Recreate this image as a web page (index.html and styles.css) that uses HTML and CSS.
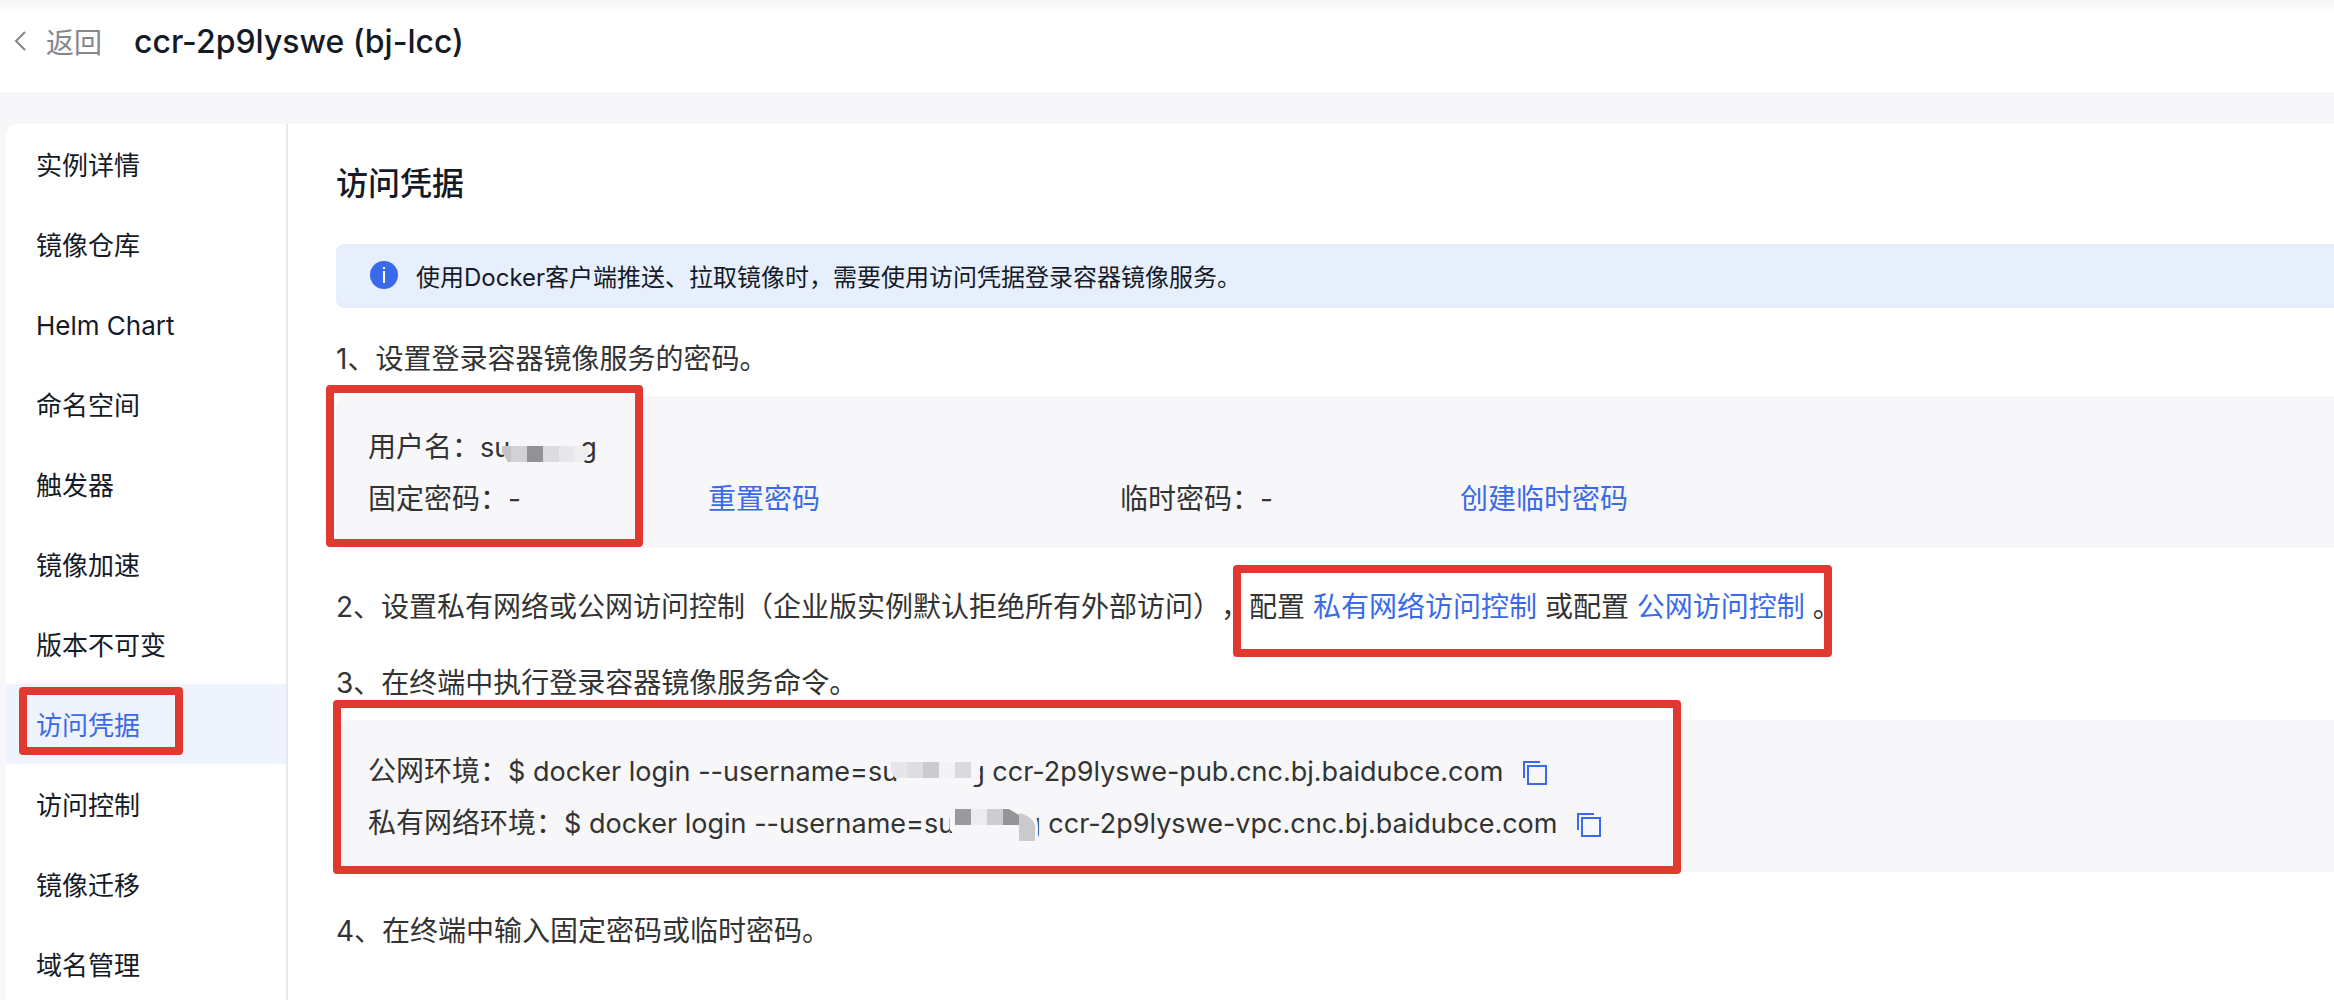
FILE: index.html
```html
<!DOCTYPE html>
<html lang="zh-CN">
<head>
<meta charset="utf-8">
<meta name="viewport" content="width=device-width, initial-scale=1">
<title>访问凭据 - ccr-2p9lyswe (bj-lcc)</title>
<link rel="stylesheet" href="styles.css">
</head>
<body>
<header class="page-header">
  <a class="back" href="#">
    <svg class="back-icon" viewBox="0 0 12 20" aria-hidden="true"><path d="M11 1 2 10l9 9"/></svg>
    <span>返回</span>
  </a>
  <h1 class="instance-name">ccr-2p9lyswe (bj-lcc)</h1>
</header>
<div class="layout">
  <nav class="sidebar">
    <a class="nav-item" href="#">实例详情</a>
    <a class="nav-item" href="#">镜像仓库</a>
    <a class="nav-item" href="#">Helm Chart</a>
    <a class="nav-item" href="#">命名空间</a>
    <a class="nav-item" href="#">触发器</a>
    <a class="nav-item" href="#">镜像加速</a>
    <a class="nav-item" href="#">版本不可变</a>
    <a class="nav-item active" href="#">访问凭据<span class="mark mark-nav"></span></a>
    <a class="nav-item" href="#">访问控制</a>
    <a class="nav-item" href="#">镜像迁移</a>
    <a class="nav-item" href="#">域名管理</a>
  </nav>
  <main class="content">
    <h2 class="title">访问凭据</h2>
    <div class="notice">
      <svg class="info-icon" viewBox="0 0 28 28" aria-hidden="true"><circle cx="14" cy="14" r="14"/><path d="M13 6h2v2h-2zM13 10h2v12h-2z"/></svg>
      <span>使用Docker客户端推送、拉取镜像时，需要使用访问凭据登录容器镜像服务。</span>
    </div>
    <p class="step">1、设置登录容器镜像服务的密码。</p>
    <div class="panel">
      <div class="row">用户名：<span class="value">su<svg class="mosaic" viewBox="0 0 94 42" aria-hidden="true"><path fill="#c4c4c6" d="M0 17h9v16H6L0 23z"/><path fill="#d2d2d4" d="M9 17h16v16H9z"/><path fill="#929294" d="M25 17h16v16H25z"/><path fill="#dcdcde" d="M41 17h16v16H41z"/><path fill="#e8e8ea" d="M57 17h15v16H57z"/><path fill="#eeeef0" d="M72 17h15v8l-5 8H72z"/></svg>g</span></div>
      <div class="row credentials">
        <span>固定密码：-</span>
        <a class="link" href="#">重置密码</a>
        <span>临时密码：-</span>
        <a class="link" href="#">创建临时密码</a>
      </div>
      <span class="mark mark-user"></span>
    </div>
    <p class="step step-network">2、设置私有网络或公网访问控制（企业版实例默认拒绝所有外部访问），<span class="config">配置 <a class="link" href="#">私有网络访问控制</a> 或配置 <a class="link" href="#">公网访问控制</a> 。<span class="mark mark-config"></span></span></p>
    <p class="step">3、在终端中执行登录容器镜像服务命令。</p>
    <div class="panel">
      <div class="row">公网环境：<span class="value">$ docker login --username=su<svg class="mosaic" viewBox="0 0 94 42" aria-hidden="true"><path fill="#f7f7f9" d="M76 8h14v20l-8 6h-6z"/><path fill="#e6e6e8" d="M1 9h16v16H5L1 17z"/><path fill="#dedee0" d="M17 9h16v16H17z"/><path fill="#cbcbcd" d="M33 9h16v16H33z"/><path fill="#f3f3f5" d="M49 9h16v16H49z"/><path fill="#dadadc" d="M65 9h16v16H65z"/></svg>g ccr-2p9lyswe-pub.cnc.bj.baidubce.com</span><button class="copy" type="button" aria-label="复制公网登录命令"><svg viewBox="0 0 24 24" aria-hidden="true"><path d="M1 17V1h16M5 5h18v18H5z"/></svg></button></div>
      <div class="row">私有网络环境：<span class="value">$ docker login --username=su<svg class="mosaic" viewBox="0 0 94 42" aria-hidden="true"><path fill="#f7f7f9" d="M4 8h6v21H8l-4-4zM74 8h14q4 6 4 14v14H74z"/><path fill="#9a9a9c" d="M9 4h16v16H9z"/><path fill="#ececee" d="M25 4h16v16H25z"/><path fill="#cdcdcf" d="M41 4h16v16H41z"/><path fill="#959597" d="M57 4h6l10 6v10H57z"/><path fill="#cbcbcd" d="M73 8q12 2 16 12v16H73z"/></svg>g ccr-2p9lyswe-vpc.cnc.bj.baidubce.com</span><button class="copy" type="button" aria-label="复制私有网络登录命令"><svg viewBox="0 0 24 24" aria-hidden="true"><path d="M1 17V1h16M5 5h18v18H5z"/></svg></button></div>
      <span class="mark mark-commands"></span>
    </div>
    <p class="step step-last">4、在终端中输入固定密码或临时密码。</p>
  </main>
</div>
</body>
</html>
```
FILE: styles.css
```css
* {
  box-sizing: border-box;
}

body {
  margin: 0;
  background: #f7f7f9;
  color: #333;
  font-family: Inter, "Noto Sans CJK SC", sans-serif;
  font-size: 28px;
  text-spacing-trim: space-all;
}

a {
  color: inherit;
  text-decoration: none;
}

.page-header {
  display: flex;
  align-items: center;
  gap: 32px;
  height: 92px;
  padding: 0 14px 10px;
  background: linear-gradient(#f5f5f5, #fff 12px);
}

.back {
  display: flex;
  align-items: center;
  gap: 20px;
  color: #84868c;
}

.back-icon {
  width: 12px;
  height: 20px;
  fill: none;
  stroke: #84868c;
  stroke-width: 2;
}

.instance-name {
  margin: 0;
  color: #151b26;
  font-size: 32px;
  font-weight: 500;
}

.layout {
  display: flex;
  margin: 32px 0 0 6px;
  background: #fff;
  border-radius: 12px 0 0 0;
}

.sidebar {
  flex: none;
  width: 282px;
  border-right: 2px solid #e8e9eb;
}

.nav-item {
  position: relative;
  display: block;
  padding: 4px 0 0 30px;
  color: #151b26;
  font-size: 26px;
  line-height: 76px;
}

.nav-item.active {
  background: #eef3fe;
  color: #3a6aeb;
}

.content {
  flex: 1;
  min-width: 0;
  padding: 36px 0 0 48px;
}

.title {
  margin: 0 0 36px;
  color: #151b26;
  font-size: 32px;
  font-weight: 500;
  line-height: 48px;
}

.notice {
  display: flex;
  align-items: center;
  gap: 18px;
  height: 64px;
  margin-bottom: 30px;
  padding: 0 0 2px 34px;
  border-radius: 8px 0 0 8px;
  background: #e7effd;
  color: #151b26;
  font-size: 24px;
}

.info-icon {
  width: 28px;
  height: 28px;
  fill: #3a6aeb;
}

.info-icon path {
  fill: #fff;
}

.step {
  margin: 0 0 16px;
  line-height: 42px;
}

.step-network {
  margin: 38px 0 34px;
}

.step-last {
  margin: 38px 0 48px;
}

.panel {
  position: relative;
  padding: 25px 32px 23px;
  border-radius: 12px 0 0 12px;
  background: #f7f7f9;
  line-height: 52px;
}

.row {
  height: 52px;
  white-space: nowrap;
}

.credentials {
  display: grid;
  grid-template-columns: 340px 412px 340px auto;
}

.link {
  color: #3a6aeb;
}

.value {
  font-size: 27px;
}

.mosaic {
  position: relative;
  width: 94px;
  height: 42px;
  margin: 0 -16px 0 -8px;
  vertical-align: middle;
}

.config {
  position: relative;
}

.copy {
  width: 24px;
  height: 24px;
  margin-left: 20px;
  padding: 0;
  border: 0;
  background: none;
  vertical-align: -4px;
}

.copy svg {
  display: block;
  fill: none;
  stroke: #3a6aeb;
  stroke-width: 2;
}

.mark {
  position: absolute;
  border: 8px solid #e0392f;
  border-radius: 4px;
  pointer-events: none;
}

.mark-nav {
  inset: 3px 103px 9px 13px;
}

.mark-user {
  top: -11px;
  left: -10px;
  width: 317px;
  height: 162px;
}

.mark-config {
  inset: -25px 9px -33px -16px;
}

.mark-commands {
  top: -20px;
  left: -3px;
  width: 1348px;
  height: 174px;
}
```
